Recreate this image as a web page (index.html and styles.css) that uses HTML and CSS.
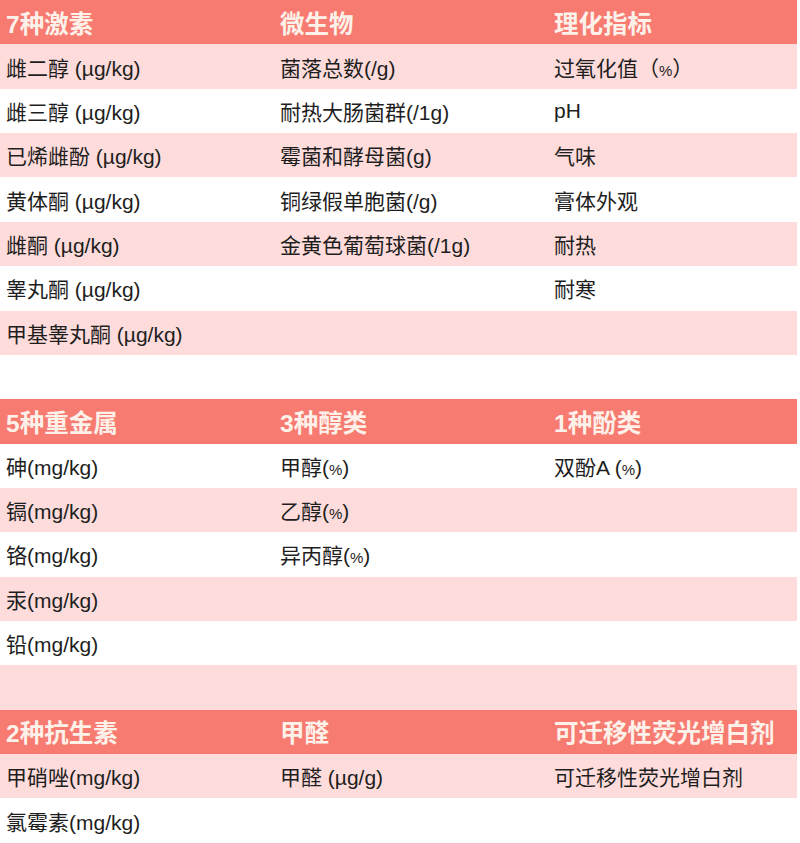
FILE: index.html
```html
<!DOCTYPE html>
<html lang="zh-CN">
<head>
<meta charset="utf-8">
<title>检测项目</title>
<link rel="stylesheet" href="styles.css">
</head>
<body>
<div class="table">
  <div class="row head"><div class="cell">7种激素</div><div class="cell">微生物</div><div class="cell">理化指标</div></div>
  <div class="row pink"><div class="cell">雌二醇 (µg/kg)</div><div class="cell">菌落总数(/g)</div><div class="cell">过氧化值（<span class="pct">%</span>）</div></div>
  <div class="row white"><div class="cell">雌三醇 (µg/kg)</div><div class="cell">耐热大肠菌群(/1g)</div><div class="cell">pH</div></div>
  <div class="row pink"><div class="cell">已烯雌酚 (µg/kg)</div><div class="cell">霉菌和酵母菌(g)</div><div class="cell">气味</div></div>
  <div class="row white"><div class="cell">黄体酮 (µg/kg)</div><div class="cell">铜绿假单胞菌(/g)</div><div class="cell">膏体外观</div></div>
  <div class="row pink"><div class="cell">雌酮 (µg/kg)</div><div class="cell">金黄色葡萄球菌(/1g)</div><div class="cell">耐热</div></div>
  <div class="row white"><div class="cell">睾丸酮 (µg/kg)</div><div class="cell"></div><div class="cell">耐寒</div></div>
  <div class="row pink"><div class="cell">甲基睾丸酮 (µg/kg)</div><div class="cell"></div><div class="cell"></div></div>
  <div class="row white"><div class="cell"></div><div class="cell"></div><div class="cell"></div></div>

  <div class="row head"><div class="cell">5种重金属</div><div class="cell">3种醇类</div><div class="cell">1种酚类</div></div>
  <div class="row white"><div class="cell">砷(mg/kg)</div><div class="cell">甲醇(<span class="pct">%</span>)</div><div class="cell">双酚A (<span class="pct">%</span>)</div></div>
  <div class="row pink"><div class="cell">镉(mg/kg)</div><div class="cell">乙醇(<span class="pct">%</span>)</div><div class="cell"></div></div>
  <div class="row white"><div class="cell">铬(mg/kg)</div><div class="cell">异丙醇(<span class="pct">%</span>)</div><div class="cell"></div></div>
  <div class="row pink"><div class="cell">汞(mg/kg)</div><div class="cell"></div><div class="cell"></div></div>
  <div class="row white"><div class="cell">铅(mg/kg)</div><div class="cell"></div><div class="cell"></div></div>
  <div class="row pink"><div class="cell"></div><div class="cell"></div><div class="cell"></div></div>

  <div class="row head"><div class="cell">2种抗生素</div><div class="cell">甲醛</div><div class="cell">可迁移性荧光增白剂</div></div>
  <div class="row pink"><div class="cell">甲硝唑(mg/kg)</div><div class="cell">甲醛 (µg/g)</div><div class="cell">可迁移性荧光增白剂</div></div>
  <div class="row white"><div class="cell">氯霉素(mg/kg)</div><div class="cell"></div><div class="cell"></div></div>
</div>
</body>
</html>
```

FILE: styles.css
```css
html, body {
  margin: 0;
  padding: 0;
  background: #ffffff;
}
body {
  font-family: "Liberation Sans", "Noto Sans CJK SC", sans-serif;
  color: #1e1e1e;
}
.table {
  width: 797px;
  display: flex;
  flex-direction: column;
}
.row {
  display: grid;
  grid-template-columns: 274px 274px 1fr;
  height: 44.37px;
  align-items: center;
}
.cell {
  padding-left: 6px;
  font-size: 21px;
  white-space: nowrap;
}
.pct {
  font-size: 15px;
}
.pink {
  background: #fddcdb;
}
.white {
  background: #ffffff;
}
.head {
  background: #f77b70;
  color: #fdf1ea;
}
.head .cell {
  font-size: 24.5px;
  font-weight: bold;
}
```
